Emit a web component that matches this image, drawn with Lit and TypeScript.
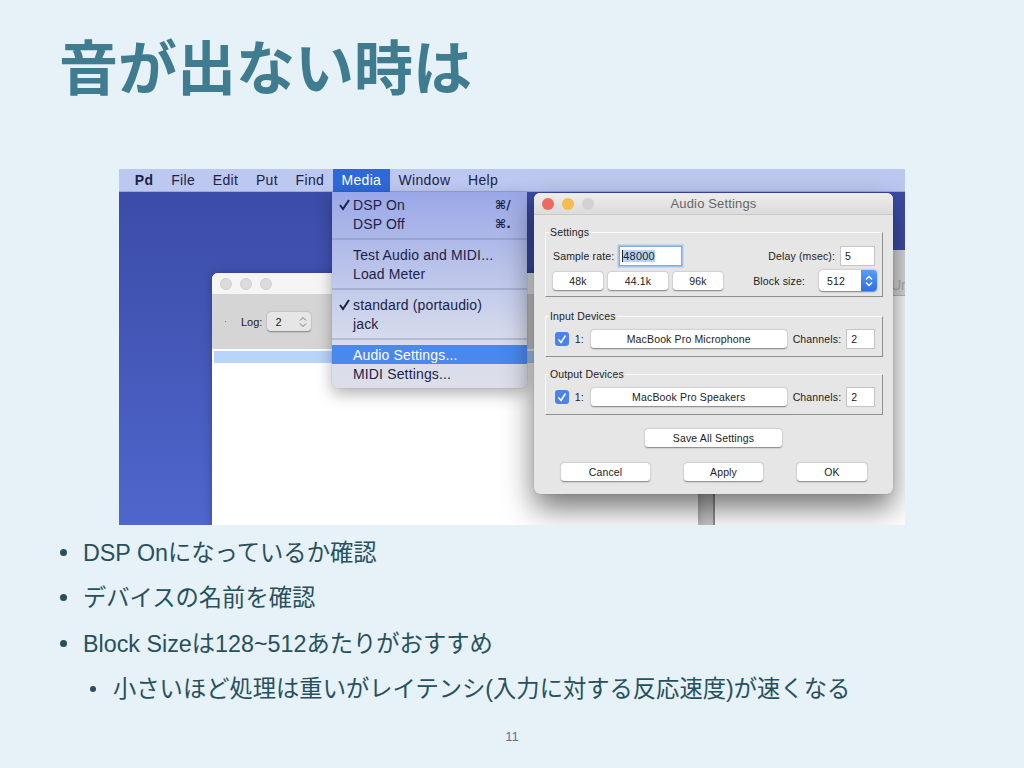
import { LitElement, css, html } from "lit";
import { customElement } from "lit/decorators.js";

const UI_FONT = css`"Liberation Sans", "Noto Sans CJK JP", sans-serif`;

@customElement("pd-settings-dialog")
export class PdSettingsDialog extends LitElement {
  static styles = css`
    :host {
      position: absolute;
      left: 415px;
      top: 24px;
      width: 359px;
      height: 301px;
      display: block;
      box-sizing: border-box;
      background: #e6e6e6;
      border-radius: 6px;
      box-shadow: 0 0 1px rgba(0, 0, 0, 0.45), 0 14px 30px rgba(0, 0, 0, 0.55);
      font-family: ${UI_FONT};
      font-size: 10.5px;
      color: #222;
      letter-spacing: 0.15px;
    }

    .titlebar {
      height: 22px;
      display: flex;
      align-items: center;
      justify-content: center;
      position: relative;
      background: linear-gradient(#ededed, #dcdcdc);
      border-bottom: 1px solid #c8c8c8;
      border-radius: 6px 6px 0 0;
      box-sizing: border-box;
      font-size: 13px;
      color: #666;
    }

    .lights {
      position: absolute;
      left: 8px;
      top: 5px;
      display: flex;
      gap: 8px;
    }

    .lights i {
      width: 12px;
      height: 12px;
      border-radius: 50%;
    }

    .body {
      padding: 17px 10px 0 11px;
      display: flex;
      flex-direction: column;
    }

    .group {
      position: relative;
      box-sizing: border-box;
      border-top: 1px solid #fafafa;
      border-left: 1px solid #f6f6f6;
      border-right: 1px solid #8f8f8f;
      border-bottom: 1px solid #8f8f8f;
    }

    .legend {
      position: absolute;
      left: 3px;
      top: -7px;
      padding: 0 1px;
      background: #e6e6e6;
      line-height: 12px;
    }

    .settings {
      height: 65px;
    }

    .device {
      height: 41px;
      display: flex;
      align-items: center;
      padding: 5px 7px 0 9px;
    }

    .gap-19 {
      margin-top: 19px;
    }

    .gap-17 {
      margin-top: 17px;
    }

    .row {
      display: flex;
      align-items: center;
    }

    .row-a {
      padding: 13px 7px 0 7px;
      height: 20px;
    }

    .row-b {
      padding: 4px 5px 0 7px;
      height: 21px;
    }

    .grow {
      flex: 1;
    }

    .input {
      background: #fff;
      border: 1px solid #c4c4c4;
      box-sizing: border-box;
      height: 20px;
      display: flex;
      align-items: center;
      padding-left: 4px;
      color: #222;
    }

    .rate {
      width: 63px;
      margin-left: 5px;
      border-color: #7fa8e6;
      box-shadow: 0 0 0 1.5px #a6c4f0;
      padding-left: 2px;
      font-size: 11px;
    }

    .rate span {
      background: #b5d3f8;
      border-left: 1px solid #222;
    }

    .delay {
      width: 35px;
      margin-left: 5px;
    }

    .btn {
      background: #fff;
      border-radius: 3px;
      box-shadow: 0 0.5px 1.5px rgba(0, 0, 0, 0.45);
      height: 18px;
      display: flex;
      align-items: center;
      justify-content: center;
      box-sizing: border-box;
    }

    .select {
      width: 58px;
      height: 21px;
      margin-left: 14px;
      border-radius: 4px;
      background: #fff;
      box-shadow: 0 0.5px 1.5px rgba(0, 0, 0, 0.45);
      display: flex;
      align-items: center;
      overflow: hidden;
    }

    .select span {
      flex: 1;
      padding-left: 8px;
    }

    .select b {
      width: 16px;
      height: 100%;
      background: linear-gradient(#5b9bf8, #2f6fe4);
      display: flex;
      align-items: center;
      justify-content: center;
    }

    .check {
      width: 14px;
      height: 14px;
      border-radius: 3px;
      background: #4a82ee;
      display: flex;
      align-items: center;
      justify-content: center;
    }

    .idx {
      margin: 0 7px 0 6px;
    }

    .device .btn {
      width: 198px;
    }

    .channels {
      margin-left: 6px;
    }

    .ch {
      width: 29px;
      margin-left: 5px;
    }

    .save {
      width: 137px;
      align-self: center;
      margin: 14px 0 0 -1px;
    }

    .actions {
      display: flex;
      margin-top: 16px;
      padding-left: 16px;
      height: 18px;
    }
  `;

  private _check() {
    return html`<span class="check">
      <svg width="10" height="10" viewBox="0 0 10 10">
        <path d="M1.5 5.5 L4 8.5 L8.5 1.5" fill="none" stroke="#fff" stroke-width="1.5" />
      </svg>
    </span>`;
  }

  render() {
    return html`
      <div class="titlebar">
        <div class="lights">
          <i style="background:#ee6a5f"></i>
          <i style="background:#f4bd4f"></i>
          <i style="background:#d2d2d2"></i>
        </div>
        Audio Settings
      </div>
      <div class="body">
        <div class="group settings">
          <div class="legend">Settings</div>
          <div class="row row-a">
            <span>Sample rate:</span>
            <div class="input rate"><span>48000</span></div>
            <span class="grow"></span>
            <span>Delay (msec):</span>
            <div class="input delay">5</div>
          </div>
          <div class="row row-b">
            <div class="btn" style="width:50px">48k</div>
            <div class="btn" style="width:60px;margin-left:5px">44.1k</div>
            <div class="btn" style="width:50px;margin-left:5px">96k</div>
            <span class="grow"></span>
            <span>Block size:</span>
            <div class="select">
              <span>512</span>
              <b>
                <svg width="8" height="14" viewBox="0 0 8 14">
                  <path d="M1 5.5 L4 2.5 L7 5.5 M1 8.5 L4 11.5 L7 8.5" fill="none" stroke="#fff" stroke-width="1.4" />
                </svg>
              </b>
            </div>
          </div>
        </div>
        <div class="group device gap-19">
          <div class="legend">Input Devices</div>
          ${this._check()}
          <span class="idx">1:</span>
          <div class="btn">MacBook Pro Microphone</div>
          <span class="channels">Channels:</span>
          <div class="input ch">2</div>
        </div>
        <div class="group device gap-17">
          <div class="legend">Output Devices</div>
          ${this._check()}
          <span class="idx">1:</span>
          <div class="btn">MacBook Pro Speakers</div>
          <span class="channels">Channels:</span>
          <div class="input ch">2</div>
        </div>
        <div class="btn save">Save All Settings</div>
        <div class="actions">
          <div class="btn" style="width:89px">Cancel</div>
          <div class="btn" style="width:79px;margin-left:34px">Apply</div>
          <div class="btn" style="width:70px;margin-left:34px">OK</div>
        </div>
      </div>
    `;
  }
}

@customElement("pd-media-menu")
export class PdMediaMenu extends LitElement {
  static styles = css`
    :host {
      position: absolute;
      left: 213px;
      top: 23px;
      width: 195px;
      height: 196px;
      display: block;
      box-sizing: border-box;
      padding-top: 3px;
      background: linear-gradient(#9aa8e8, #d6dcec 75%, #dcdfe8);
      border-radius: 0 0 6px 6px;
      box-shadow: 0 6px 16px rgba(0, 0, 0, 0.3), 0 0 1px rgba(0, 0, 0, 0.4);
      font-family: ${UI_FONT};
      font-size: 14px;
      letter-spacing: 0.15px;
      color: #1d2247;
    }

    .item {
      height: 19px;
      display: flex;
      align-items: center;
      padding-left: 21px;
      position: relative;
    }

    .tick {
      position: absolute;
      left: 6px;
      top: 3px;
    }

    .key {
      position: absolute;
      left: 163px;
      font-family: "DejaVu Sans", sans-serif;
      font-size: 12px;
      font-weight: 700;
    }

    .sep {
      height: 2px;
      margin: 5px 0 5px;
      background: rgba(120, 130, 170, 0.35);
    }

    .sel {
      background: #4a88ee;
      color: #fff;
    }
  `;

  private _tick() {
    return html`<svg class="tick" width="13" height="13" viewBox="0 0 13 13">
      <path d="M2 7 L5 11 L11 2" fill="none" stroke="#1d2247" stroke-width="2" />
    </svg>`;
  }

  render() {
    return html`
      <div class="item">${this._tick()}DSP On<span class="key">⌘/</span></div>
      <div class="item">DSP Off<span class="key">⌘.</span></div>
      <div class="sep"></div>
      <div class="item">Test Audio and MIDI...</div>
      <div class="item">Load Meter</div>
      <div class="sep"></div>
      <div class="item">${this._tick()}standard (portaudio)</div>
      <div class="item">jack</div>
      <div class="sep"></div>
      <div class="item sel">Audio Settings...</div>
      <div class="item">MIDI Settings...</div>
    `;
  }
}

@customElement("pd-desktop")
export class PdDesktop extends LitElement {
  static styles = css`
    :host {
      display: block;
      position: relative;
      width: 786px;
      height: 356px;
      margin-left: 119px;
      overflow: hidden;
      background: linear-gradient(#3a4aa5, #4f66cc);
      font-family: ${UI_FONT};
    }

    .menubar {
      height: 23px;
      background: #bcc8f0;
      border-bottom: 1px solid #9fa9d2;
      box-sizing: border-box;
      display: flex;
      align-items: center;
      padding-left: 7px;
      font-size: 14px;
      letter-spacing: 0.35px;
      color: #1d2247;
    }

    .menubar span {
      padding: 0 8.8px;
      line-height: 23px;
    }

    .menubar .app {
      font-weight: 700;
      padding-right: 9px;
    }

    .menubar .open {
      background: #2f68d8;
      color: #fff;
      padding: 0 8.4px;
    }

    .log-window {
      position: absolute;
      left: 93px;
      top: 104px;
      width: 486px;
      height: 252px;
      background: #fff;
      border-radius: 6px 0 0 0;
      box-shadow: 0 0 10px rgba(0, 0, 0, 0.25);
    }

    .log-title {
      height: 21px;
      background: #f5f5f5;
      border-radius: 6px 0 0 0;
      display: flex;
      align-items: center;
      gap: 8px;
      padding-left: 8px;
    }

    .log-title i {
      width: 12px;
      height: 12px;
      border-radius: 50%;
      background: #dcdcdc;
      border: 0.5px solid #cfcfcf;
      box-sizing: border-box;
    }

    .log-tools {
      height: 55px;
      background: #d5d5d5;
      display: flex;
      align-items: center;
      padding-left: 13px;
      font-size: 11px;
      color: #222;
    }

    .dot {
      width: 1px;
      height: 1px;
      margin-right: 15px;
      background: #777;
    }

    .spin {
      margin-left: 5px;
      width: 44px;
      height: 19px;
      background: #e6e6e6;
      border-radius: 4px;
      box-shadow: 0 0.5px 1.5px rgba(0, 0, 0, 0.4);
      display: flex;
      align-items: center;
      justify-content: space-between;
      padding: 0 4px 0 8px;
      box-sizing: border-box;
    }

    .log-row {
      height: 12px;
      margin: 2px 0 0 2px;
      background: #b7d4fb;
    }

    .back-window {
      position: absolute;
      left: 578px;
      top: 81px;
      width: 208px;
      height: 275px;
      background: #fff;
    }

    .back-strip {
      width: 16px;
      height: 100%;
      background: #c6c6c6;
      border-right: 2px solid #8e8e8e;
    }

    .back-head {
      position: absolute;
      left: 18px;
      right: 0;
      top: 0;
      height: 45px;
      background: #dedede;
      border-bottom: 1px solid #bdbdbd;
    }

    .un {
      position: absolute;
      left: 194px;
      top: 27px;
      font-size: 14px;
      color: #b0b0b0;
    }
  `;

  render() {
    return html`
      <div class="menubar">
        <span class="app">Pd</span><span>File</span><span>Edit</span><span>Put</span
        ><span>Find</span><span class="open">Media</span><span>Window</span><span>Help</span>
      </div>
      <div class="back-window">
        <div class="back-strip"></div>
        <div class="back-head"></div>
        <div class="un">Un</div>
      </div>
      <div class="log-window">
        <div class="log-title"><i></i><i></i><i></i></div>
        <div class="log-tools">
          <span class="dot"></span>
          Log:
          <div class="spin">
            2
            <svg width="8" height="12" viewBox="0 0 8 12">
              <path d="M1 4.5 L4 1.5 L7 4.5 M1 7.5 L4 10.5 L7 7.5" fill="none" stroke="#777" stroke-width="1" />
            </svg>
          </div>
        </div>
        <div class="log-row"></div>
      </div>
      <pd-media-menu></pd-media-menu>
      <pd-settings-dialog></pd-settings-dialog>
    `;
  }
}

@customElement("app-root")
export class AppRoot extends LitElement {
  static styles = css`
    :host {
      display: block;
      width: 1024px;
      height: 768px;
      overflow: hidden;
      background: #e6f1f8;
      font-family: "Liberation Sans", "Noto Sans CJK JP", sans-serif;
    }

    h1 {
      margin: 0;
      padding: 30px 0 0 59px;
      height: 169px;
      box-sizing: border-box;
      font-size: 59px;
      line-height: 70px;
      font-weight: 700;
      color: #407c90;
      font-family: "Noto Sans CJK JP", sans-serif;
    }

    ul {
      list-style: none;
      margin: 0;
      padding: 6px 0 0 0;
      font-size: 23.3px;
      color: #27505e;
    }

    li {
      height: 45.3px;
      line-height: 45px;
      padding-left: 83px;
      position: relative;
    }

    li::before {
      content: "";
      position: absolute;
      left: 60px;
      top: 18px;
      width: 7px;
      height: 7px;
      border-radius: 50%;
      background: #27505e;
    }

    li.sub {
      padding-left: 113px;
    }

    li.sub::before {
      left: 90px;
      width: 6px;
      height: 6px;
      top: 19px;
    }

    .page {
      margin: 0;
      padding-top: 18px;
      text-align: center;
      font-size: 13px;
      line-height: 14px;
      color: #5a7885;
    }
  `;

  render() {
    return html`
      <h1>音が出ない時は</h1>
      <pd-desktop></pd-desktop>
      <ul>
        <li>DSP Onになっているか確認</li>
        <li>デバイスの名前を確認</li>
        <li>Block Sizeは128~512あたりがおすすめ</li>
        <li class="sub">小さいほど処理は重いがレイテンシ(入力に対する反応速度)が速くなる</li>
      </ul>
      <p class="page">11</p>
    `;
  }
}
